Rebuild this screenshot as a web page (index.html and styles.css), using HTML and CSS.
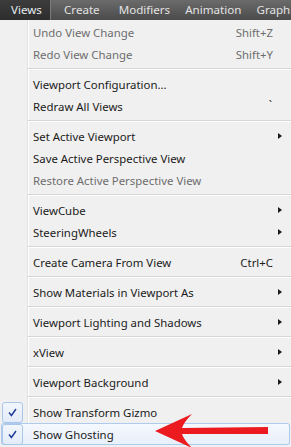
FILE: index.html
```html
<!DOCTYPE html>
<html>
  <head>
    <meta charset="UTF-8" />
    <title>Views menu</title>
    <link rel="stylesheet" href="styles.css">
  </head>
  <body>
    <div class="menubar">
      <span class="top-item active">Views</span>
      <span class="top-item create">Create</span>
      <span class="top-item">Modifiers</span>
      <span class="top-item">Animation</span>
      <span class="top-item">Graph Editors</span>
    </div>

    <div class="menu">
      <div class="item disabled"><span class="gutter"></span><span class="label">Undo View Change</span><span class="key">Shift+Z</span><span class="sub"></span></div>
      <div class="item disabled"><span class="gutter"></span><span class="label">Redo View Change</span><span class="key">Shift+Y</span><span class="sub"></span></div>
      <div class="sep"></div>
      <div class="item"><span class="gutter"></span><span class="label">Viewport Configuration...</span><span class="sub"></span></div>
      <div class="item"><span class="gutter"></span><span class="label">Redraw All Views</span><span class="key tick">`</span><span class="sub"></span></div>
      <div class="sep"></div>
      <div class="item"><span class="gutter"></span><span class="label">Set Active Viewport</span><span class="sub arrow"></span></div>
      <div class="item"><span class="gutter"></span><span class="label">Save Active Perspective View</span><span class="sub"></span></div>
      <div class="item disabled"><span class="gutter"></span><span class="label">Restore Active Perspective View</span><span class="sub"></span></div>
      <div class="sep"></div>
      <div class="item"><span class="gutter"></span><span class="label">ViewCube</span><span class="sub arrow"></span></div>
      <div class="item"><span class="gutter"></span><span class="label">SteeringWheels</span><span class="sub arrow"></span></div>
      <div class="sep"></div>
      <div class="item"><span class="gutter"></span><span class="label">Create Camera From View</span><span class="key">Ctrl+C</span><span class="sub"></span></div>
      <div class="sep"></div>
      <div class="item"><span class="gutter"></span><span class="label">Show Materials in Viewport As</span><span class="sub arrow"></span></div>
      <div class="sep"></div>
      <div class="item"><span class="gutter"></span><span class="label">Viewport Lighting and Shadows</span><span class="sub arrow"></span></div>
      <div class="sep"></div>
      <div class="item"><span class="gutter"></span><span class="label">xView</span><span class="sub arrow"></span></div>
      <div class="sep"></div>
      <div class="item"><span class="gutter"></span><span class="label">Viewport Background</span><span class="sub arrow"></span></div>
      <div class="sep"></div>
      <div class="item">
        <span class="gutter"><span class="checkbox"><svg width="9" height="9" viewBox="0 0 9 9"><path d="M1 4.5 L3.4 7.5 L8 1" fill="none" stroke="#1d3c98" stroke-width="1.4"/></svg></span></span>
        <span class="label">Show Transform Gizmo</span><span class="sub"></span>
      </div>
      <div class="item hot">
        <span class="gutter"><span class="checkbox"><svg width="9" height="9" viewBox="0 0 9 9"><path d="M1 4.5 L3.4 7.5 L8 1" fill="none" stroke="#1d3c98" stroke-width="1.4"/></svg></span></span>
        <span class="label">Show Ghosting</span><span class="sub"></span>
      </div>
    </div>

    <!-- red callout arrow pointing at the hovered item -->
    <svg class="callout" width="291" height="447" viewBox="0 0 291 447">
      <path d="M155 431 L192 414 Q184 422 182 428 L268 427 L268 434 L182 434 Q184 440 192 448 Z" fill="#ec1b1f"/>
    </svg>
  </body>
</html>
```

FILE: styles.css
```css
body {
  margin: 0;
  width: 291px;
  height: 447px;
  overflow: hidden;
  position: relative;
  font-family: 'Noto Sans', 'Open Sans', sans-serif;
  font-size: 11.4px;
  background-color: #f0f0f0;
  color: #1b1b1b;
}
.menubar {
  display: flex;
  height: 20px;
  background: linear-gradient(#6b6b6b, #4b4b4b);
  color: #e2e2e2;
  font-size: 11.6px;
  white-space: nowrap;
  overflow: hidden;
}
.top-item {
  flex: none;
  line-height: 20px;
  padding: 0 7px 0 8px;
}
.top-item.active {
  box-sizing: border-box;
  width: 51px;
  padding: 0 0 0 11px;
  background: linear-gradient(#3c3c3c, #2d2d2d);
  border-right: 1px solid #7a7a7a;
  color: #e4ecef;
}
.top-item.create {
  padding: 0 11px 0 13px;
}
.menu {
  background: linear-gradient(to right, #f0f0f0 27px, #e2e3e3 27px, #e2e3e3 28px, #ffffff 28px, #ffffff 29px, #f0f0f0 29px);
  padding-top: 1px;
}
.item {
  display: flex;
  align-items: center;
  height: 22px;
  white-space: nowrap;
}
.item.disabled {
  color: #6d6d6d;
}
.gutter {
  display: flex;
  align-items: center;
  width: 28px;
  height: 100%;
  flex: none;
}
.label {
  flex: 1;
  padding-left: 5px;
}
.key {
  text-align: right;
}
.key.tick {
  padding-right: 1px;
  position: relative;
  top: -2px;
}
.sub {
  width: 18px;
  flex: none;
  align-self: stretch;
  display: flex;
  align-items: center;
}
.sub.arrow::before {
  content: '';
  margin-left: 5px;
  border-left: 4px solid #1b1b1b;
  border-top: 3.5px solid transparent;
  border-bottom: 3.5px solid transparent;
}
.sep {
  height: 8px;
  margin-left: 28px;
  background: linear-gradient(transparent 3px, #d7d7d7 3px, #d7d7d7 4px, #ffffff 4px, #ffffff 5px, transparent 5px);
}
.checkbox {
  box-sizing: border-box;
  display: flex;
  align-items: center;
  justify-content: center;
  width: 21px;
  height: 21px;
  margin-left: 2px;
  border: 1px solid #a9c6e8;
  border-radius: 3px;
  background: linear-gradient(#f1f6fc, #e3ecf8);
}
.item.hot {
  margin: 0 1px;
  border-radius: 3px;
  box-shadow: inset 0 0 0 1px #aecbee;
  background: linear-gradient(#f6f9fe, #e7eff9);
}
.item.hot .gutter {
  width: 27px;
}
.item.hot .checkbox {
  margin-left: 1px;
}
.item.hot .sub {
  width: 17px;
}
.callout {
  position: absolute;
  left: 0;
  top: 0;
  pointer-events: none;
}
```
